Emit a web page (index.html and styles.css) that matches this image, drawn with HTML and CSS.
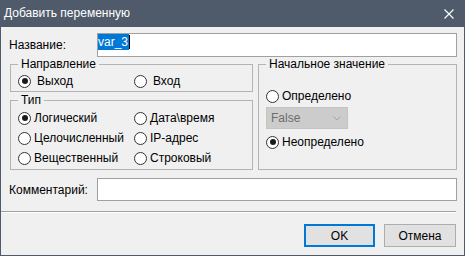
FILE: index.html
```html
<!DOCTYPE html>
<html lang="ru">
<head>
  <meta charset="UTF-8">
  <title>Добавить переменную</title>
  <link rel="stylesheet" href="styles.css">
</head>
<body>
  <div class="window">
    <div class="titlebar">
      <span>Добавить переменную</span>
      <svg class="close" width="10" height="10" viewBox="0 0 10 10">
        <path d="M0.5 0.5 L9.5 9.5 M9.5 0.5 L0.5 9.5" stroke="#fff" stroke-width="1.1" fill="none"/>
      </svg>
    </div>

    <div class="main">
      <div class="field-row">
        <label class="field-label">Название:</label>
        <div class="textbox"><span class="sel">var_3</span><span class="caret"></span></div>
      </div>

      <div class="groups">
        <div class="left-col">
          <fieldset class="group">
            <legend>Направление</legend>
            <div class="radio-grid wide">
              <div class="radio-item"><span class="radio checked"></span>Выход</div>
              <div class="radio-item"><span class="radio"></span>Вход</div>
            </div>
          </fieldset>

          <fieldset class="group type-group">
            <legend>Тип</legend>
            <div class="radio-grid">
              <div class="radio-item"><span class="radio checked"></span>Логический</div>
              <div class="radio-item"><span class="radio"></span>Дата\время</div>
              <div class="radio-item"><span class="radio"></span>Целочисленный</div>
              <div class="radio-item"><span class="radio"></span>IP-адрес</div>
              <div class="radio-item"><span class="radio"></span>Вещественный</div>
              <div class="radio-item"><span class="radio"></span>Строковый</div>
            </div>
          </fieldset>
        </div>

        <fieldset class="group init-group">
          <legend>Начальное значение</legend>
          <div class="radio-item"><span class="radio"></span>Определено</div>
          <div class="combo">
            <span>False</span>
            <svg width="8" height="5" viewBox="0 0 8 5">
              <path d="M0.5 0.5 L4 4 L7.5 0.5" stroke="#a6a6a6" fill="none"/>
            </svg>
          </div>
          <div class="radio-item undefined"><span class="radio checked"></span>Неопределено</div>
        </fieldset>
      </div>

      <div class="field-row comment-row">
        <label class="field-label">Комментарий:</label>
        <div class="textbox"></div>
      </div>
    </div>

    <div class="footer">
      <button class="btn default">OK</button>
      <button class="btn">Отмена</button>
    </div>
  </div>
</body>
</html>
```

FILE: styles.css
```css
body {
  margin: 0;
  font-family: "Liberation Sans", Arial, sans-serif;
  font-size: 12px;
  color: #000;
  background: #f0f0f0;
}
.window {
  width: 465px;
  height: 256px;
  box-sizing: border-box;
  border: 1px solid #4f5b6b;
  border-top: none;
  background: #f0f0f0;
  display: flex;
  flex-direction: column;
}
.titlebar {
  height: 27px;
  background: #4f5b6b;
  color: #fff;
  display: flex;
  align-items: center;
  justify-content: space-between;
  padding: 0 10px 0 3px;
  line-height: 27px;
}
.close {
  display: block;
}
.main {
  padding: 6px 7px 0 8px;
}
.field-row {
  display: flex;
  align-items: center;
}
.field-label {
  width: 88px;
  flex: none;
}
.textbox {
  flex: 1;
  height: 24px;
  box-sizing: border-box;
  border: 1px solid #a0a0a0;
  background: #fff;
  display: flex;
  align-items: flex-start;
}
.sel {
  background: #0078d7;
  color: #fff;
  line-height: 16px;
  padding: 0 1px 0 0;
  margin-top: 0;
}
.caret {
  width: 1px;
  height: 14px;
  margin-top: 1px;
  background: #000;
}

/* group boxes */
.groups {
  display: flex;
  gap: 5px;
  margin-left: 1px;
}
.left-col {
  width: 243px;
  flex: none;
}
.group {
  margin: 0;
  padding: 0 7px;
  border: 1px solid #b4b4b4;
  min-width: 0;
}
.group legend {
  padding: 0 3px;
  line-height: 14px;
}
.type-group {
  margin-top: 1px;
  padding-top: 1px;
  padding-bottom: 1px;
}
.radio-grid {
  display: grid;
  grid-template-columns: 116px 1fr;
}
.radio-item {
  height: 20px;
  display: flex;
  align-items: center;
  gap: 3px;
  white-space: nowrap;
}
.wide .radio-item {
  gap: 6px;
}
.radio {
  width: 13px;
  height: 13px;
  box-sizing: border-box;
  border: 1px solid #333;
  border-radius: 50%;
  background: #fff;
  flex: none;
  display: flex;
  align-items: center;
  justify-content: center;
}
.radio.checked::after {
  content: "";
  width: 6px;
  height: 6px;
  border-radius: 50%;
  background: #1a1a1a;
}
.init-group {
  flex: 1;
  padding-top: 15px;
}
.combo {
  width: 82px;
  height: 22px;
  box-sizing: border-box;
  margin-top: 1px;
  border: 1px solid #c4c4c4;
  background: #cccccc;
  color: #6d6d6d;
  display: flex;
  align-items: center;
  justify-content: space-between;
  padding: 0 6px 0 4px;
}
.combo svg {
  display: block;
}
.undefined {
  margin-top: 3px;
}
.comment-row {
  margin-top: 8px;
}
.comment-row .textbox {
  height: 23px;
}

/* buttons */
.footer {
  margin-top: 10px;
  margin-right: 8px;
  border-top: 1px solid #a0a0a0;
  box-shadow: inset 0 1px #fff;
  padding-top: 12px;
  display: flex;
  justify-content: flex-end;
  gap: 9px;
}
.btn {
  width: 71px;
  height: 23px;
  box-sizing: border-box;
  border: 1px solid #adadad;
  background: #e1e1e1;
  font-family: "Liberation Sans", Arial, sans-serif;
  font-size: 12px;
  color: #000;
  padding: 0;
}
.btn.default {
  border: 2px solid #0078d7;
}
.btn + .btn {
  width: 72px;
}
```
